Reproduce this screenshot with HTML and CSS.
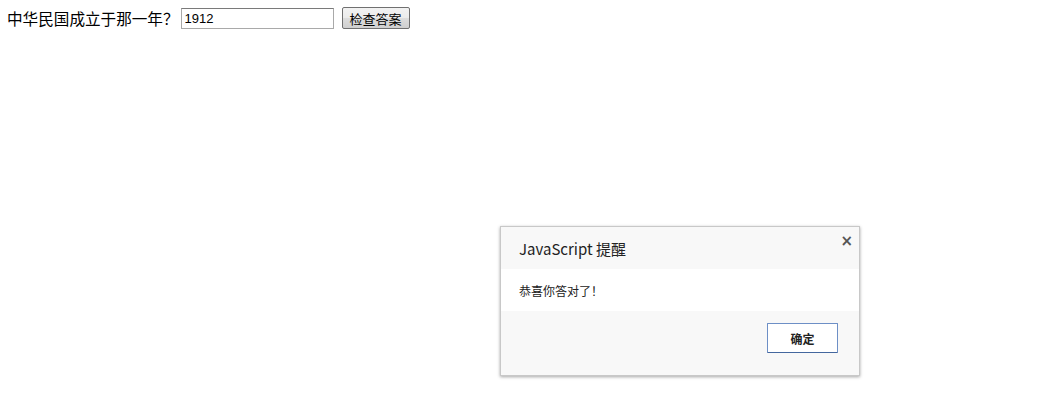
FILE: index.html
```html
<!DOCTYPE html>
<html lang="zh">
<head>
<meta charset="utf-8">
<title>问答</title>
<link rel="stylesheet" href="styles.css">
</head>
<body>
<form class="quiz">
  <label class="question" for="answer">中华民国成立于那一年？</label>
  <input class="answer" id="answer" type="text" value="1912">
  <button class="check" type="button">检查答案</button>
</form>

<div class="dialog" role="alertdialog">
  <div class="dialog-head">
    <span class="dialog-title">JavaScript 提醒</span>
    <span class="dialog-close">×</span>
  </div>
  <div class="dialog-body">恭喜你答对了！</div>
  <div class="dialog-foot">
    <button class="dialog-ok" type="button">确定</button>
  </div>
</div>
</body>
</html>
```

FILE: styles.css
```css
html, body {
  background: #fff;
}
body {
  margin: 7px 7px;
  font-family: "Noto Sans CJK SC", "Liberation Sans", sans-serif;
  color: #000;
}
.quiz {
  display: flex;
  align-items: center;
  height: 22px;
}
.question {
  font-size: 15.6px;
  line-height: 22px;
}
.answer {
  box-sizing: border-box;
  width: 153px;
  height: 21px;
  margin: 0 0 0 2px;
  padding: 1px 3px;
  border: 1px solid #a9a9a9;
  border-top-color: #7a7a7a;
  font-family: "Liberation Sans", sans-serif;
  font-size: 13px;
  color: #000;
  outline: none;
}
.check {
  box-sizing: border-box;
  width: 68px;
  height: 22px;
  margin-left: 8px;
  padding: 0;
  border: 1px solid #707070;
  border-radius: 2px;
  background: linear-gradient(#f2f2f2, #ebebeb 50%, #dddddd 51%, #cfcfcf);
  font-family: "Noto Sans CJK SC", sans-serif;
  font-size: 13px;
  color: #000;
}

.dialog {
  position: absolute;
  left: 500px;
  top: 226px;
  width: 360px;
  height: 150px;
  box-sizing: border-box;
  border: 1px solid #c8c8c8;
  box-shadow: 0 1px 3px rgba(0,0,0,0.35);
  background: #f8f8f8;
  display: flex;
  flex-direction: column;
  font-family: "Noto Sans CJK SC", sans-serif;
}
.dialog-head {
  height: 42px;
  display: flex;
  align-items: flex-start;
  justify-content: space-between;
  padding: 0 6px 0 18px;
  background: #f8f8f8;
}
.dialog-title {
  font-size: 15px;
  line-height: 20px;
  margin-top: 12px;
  color: #222;
}
.dialog-close {
  font-family: "DejaVu Sans", sans-serif;
  font-size: 15px;
  font-weight: bold;
  line-height: 14px;
  margin-top: 7px;
  color: #555;
}
.dialog-body {
  height: 42px;
  background: #fff;
  padding-left: 18px;
  font-size: 12px;
  line-height: 44px;
  color: #222;
}
.dialog-foot {
  flex: 1;
  display: flex;
  justify-content: flex-end;
  align-items: flex-start;
  padding: 12px 21px 0 0;
  background: #f8f8f8;
}
.dialog-ok {
  box-sizing: border-box;
  width: 71px;
  height: 30px;
  padding: 0;
  border: 1px solid #6d8fc6;
  border-bottom-color: #44679e;
  border-radius: 1px;
  background: #fff;
  font-family: "Noto Sans CJK SC", sans-serif;
  font-size: 12px;
  font-weight: bold;
  color: #222;
}
```
